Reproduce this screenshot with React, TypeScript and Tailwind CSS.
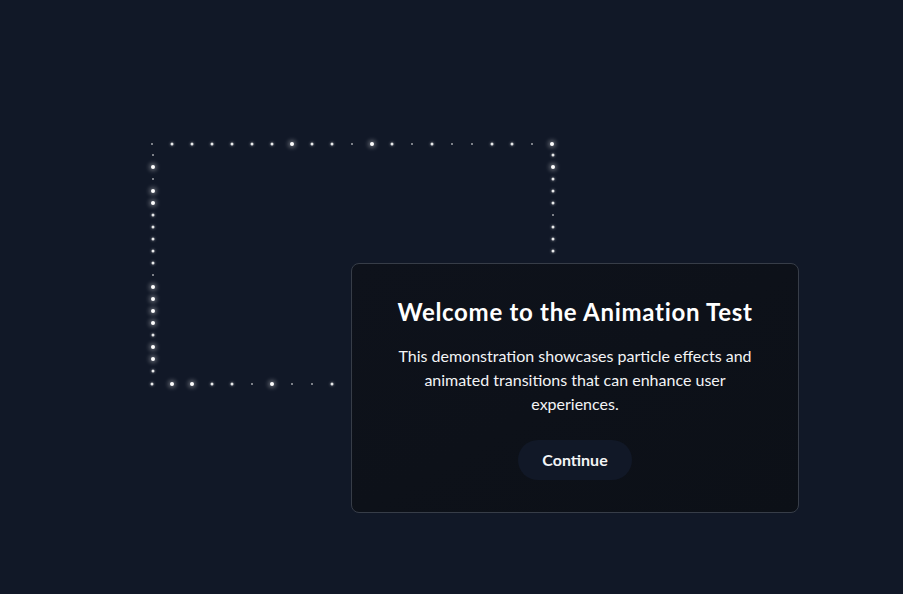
import React from 'react';

type Size = 's' | 'm' | 'l';

// dot sizes per edge, measured off the reference
const topRow: Size[] = ['s', 'm', 'm', 'm', 'm', 'm', 'm', 'l', 'm', 'm', 's', 'l', 'm', 's', 'm', 's', 's', 'm', 'm', 's', 'l'];
const rightCol: Size[] = ['l', 'm', 'l', 'm', 'm', 'm', 's', 'm', 'm', 'm'];
const leftCol: Size[] = ['s', 's', 'l', 's', 'l', 'l', 'm', 'm', 'm', 'm', 'm', 's', 'l', 'l', 'l', 'l', 'm', 'l', 'l', 'm', 'm'];
const bottomRow: Size[] = ['m', 'l', 'l', 'm', 'm', 's', 'l', 's', 's', 'm'];

const dotClass: Record<Size, string> = {
  s: 'w-[2px] h-[2px] bg-white/60',
  m: 'w-[3px] h-[3px] bg-white/90 shadow-[0_0_3px_rgba(255,255,255,0.6)]',
  l: 'w-[4px] h-[4px] bg-white shadow-[0_0_5px_1px_rgba(255,255,255,0.55)]',
};

function Dot({ x, y, size }: { x: number; y: number; size: Size }) {
  return (
    <span
      className={`absolute rounded-full -translate-x-1/2 -translate-y-1/2 ${dotClass[size]}`}
      style={{ left: x, top: y }}
    />
  );
}

function ParticleFrame() {
  const dots: { x: number; y: number; size: Size }[] = [];
  topRow.forEach((s, i) => dots.push({ x: i * 20, y: 0.5, size: s }));
  bottomRow.forEach((s, i) => dots.push({ x: i * 20, y: 240.5, size: s }));
  leftCol.forEach((s, i) => i > 0 && i < 20 && dots.push({ x: 0.5, y: i * 12, size: s }));
  rightCol.forEach((s, i) => i > 0 && dots.push({ x: 400.5, y: i * 12, size: s }));
  return (
    <>
      {dots.map((d, i) => (
        <Dot key={i} {...d} />
      ))}
    </>
  );
}

export default function App() {
  return (
    <div className="relative min-h-screen h-[594px] overflow-hidden bg-[#111827] font-['Lato','Noto_Sans',sans-serif] text-white">
      <div className="absolute left-[152px] top-[143px] w-[400px] h-[240px]">
        <ParticleFrame />

        {/* Modal */}
        <div className="absolute left-[199px] top-[120px] w-[448px] rounded-lg border border-[#373d48] bg-gradient-to-br from-[#0e121b] to-[#0c1017] px-8 pt-8 pb-8 text-center">
          <h2 className="text-2xl leading-8 font-bold tracking-[0.7px] mb-4">Welcome to the Animation Test</h2>
          <p className="text-base leading-6 text-gray-100">
            This demonstration showcases particle effects and animated transitions that can enhance user
            experiences.
          </p>
          <button className="mt-6 rounded-full bg-[#111827] px-6 py-2 text-base leading-6 font-bold text-gray-100">
            Continue
          </button>
        </div>
      </div>
    </div>
  );
}
